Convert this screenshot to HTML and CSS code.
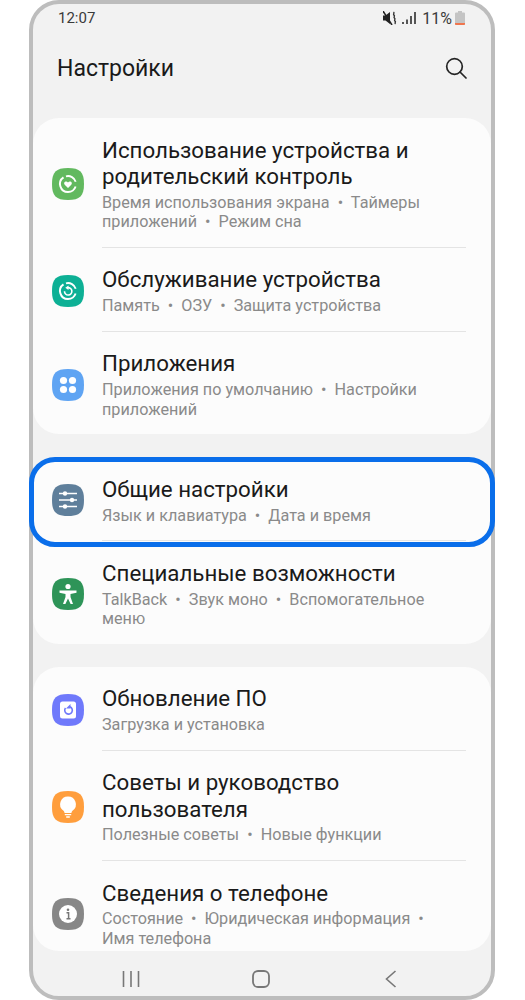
FILE: index.html
```html
<!DOCTYPE html>
<html lang="ru">
<head>
    <meta charset="utf-8">
    <title>Настройки</title>
    <link rel="stylesheet" href="styles.css">
</head>
<body>
    <div class="phone">
        <div class="status">
            <span class="time">12:07</span>
            <div class="status-right">
                <svg class="st-mute" width="14" height="14" viewBox="0 0 14 14"><path d="M0 4.500h2.500L7 1v12L2.500 9.500H0z" fill="#222"/><path d="M0 0l9 14" stroke="#222" stroke-width="1.500"/><path d="M10.500 1c1.500 1.200-1 2.200.5 3.200s-1 2 .5 3-1 2 .5 3-1 1.500.5 2.800" stroke="#333" stroke-width="1.400" fill="none"/></svg>
                <svg class="st-signal" width="14" height="14" viewBox="0 0 14 14"><rect x="0" y="11" width="2" height="2" fill="#555"/><rect x="4" y="8.500" width="2" height="4.500" fill="#555"/><rect x="8" y="5" width="2" height="8" fill="#555"/><rect x="12" y="1" width="2" height="12" fill="#555"/></svg>
                <span class="pct">11%</span>
                <svg class="st-batt" width="10" height="14" viewBox="0 0 10 14"><path d="M3 0h4v1.500h2a1 1 0 0 1 1 1V13a1 1 0 0 1-1 1H1a1 1 0 0 1-1-1V2.500a1 1 0 0 1 1-1h2z" fill="#c4c4c4"/><path d="M0 12h10v1a1 1 0 0 1-1 1H1a1 1 0 0 1-1-1z" fill="#f0764e"/></svg>
            </div>
        </div>

        <div class="header">
            <h1>Настройки</h1>
            <svg width="22" height="22" viewBox="0 0 22 22"><circle cx="9.500" cy="9.500" r="7.800" fill="none" stroke="#252525" stroke-width="1.700"/><path d="M15 15l6 6" stroke="#252525" stroke-width="1.700" stroke-linecap="round"/></svg>
        </div>

        <div class="card">
            <div class="row">
                <svg class="ico" viewBox="0 0 32 32"><path fill="#62b95f" d="M16 0C28 0 32 4 32 16S28 32 16 32 0 28 0 16 4 0 16 0Z"/><path d="M23.600 18.500A8 8 0 0 1 16 24a8 8 0 0 1-4.500-14.600" fill="none" stroke="#fff" stroke-width="1.900"/><path d="M14 8.300a8 8 0 0 1 9.700 5.500" fill="none" stroke="#fff" stroke-width="1.900"/><path d="M16 20l-3.300-3.300c-1.800-2 1.200-4.400 3.300-2.200 2.100-2.200 5.100.2 3.300 2.200z" fill="#fff"/></svg>
                <div class="txt">
                    <div class="title">Использование устройства и родительский контроль</div>
                    <div class="sub">Время использования экрана&nbsp; •&nbsp; Таймеры приложений&nbsp; •&nbsp; Режим сна</div>
                </div>
            </div>
            <div class="sep"></div>
            <div class="row">
                <svg class="ico" viewBox="0 0 32 32"><path fill="#0db095" d="M16 0C28 0 32 4 32 16S28 32 16 32 0 28 0 16 4 0 16 0Z"/><path d="M23.600 18.500A8 8 0 0 1 16 24a8 8 0 0 1-4.500-14.600" fill="none" stroke="#fff" stroke-width="1.900"/><path d="M14 8.300a8 8 0 0 1 9.700 5.500" fill="none" stroke="#fff" stroke-width="1.900"/><path d="M15.500 12.700a3.700 3.700 0 1 1-3 3.500" fill="none" stroke="#fff" stroke-width="1.600"/><path d="M16.500 10.500l-3.200 2.300 3.200 2.300z" fill="#fff"/></svg>
                <div class="txt">
                    <div class="title">Обслуживание устройства</div>
                    <div class="sub">Память&nbsp; •&nbsp; ОЗУ&nbsp; •&nbsp; Защита устройства</div>
                </div>
            </div>
            <div class="sep"></div>
            <div class="row">
                <svg class="ico" viewBox="0 0 32 32"><path fill="#5fa4f3" d="M16 0C28 0 32 4 32 16S28 32 16 32 0 28 0 16 4 0 16 0Z"/><circle cx="11.500" cy="11.500" r="3.600" fill="#fff"/><circle cx="20.500" cy="11.500" r="3.600" fill="#fff"/><circle cx="11.500" cy="20.500" r="3.600" fill="#fff"/><circle cx="20.500" cy="20.500" r="3.600" fill="#fff"/></svg>
                <div class="txt">
                    <div class="title">Приложения</div>
                    <div class="sub">Приложения по умолчанию&nbsp; •&nbsp; Настройки приложений</div>
                </div>
            </div>
        </div>

        <div class="card">
            <div class="highlight"></div>
            <div class="row">
                <svg class="ico" viewBox="0 0 32 32"><path fill="#5f7f9b" d="M16 0C28 0 32 4 32 16S28 32 16 32 0 28 0 16 4 0 16 0Z"/><path d="M7 9.500h18M7 16h18M7 22.500h18" stroke="#fff" stroke-width="1.500"/><circle cx="13" cy="9.500" r="2.200" fill="#fff"/><circle cx="20" cy="16" r="2.200" fill="#fff"/><circle cx="13" cy="22.500" r="2.200" fill="#fff"/></svg>
                <div class="txt">
                    <div class="title">Общие настройки</div>
                    <div class="sub">Язык и клавиатура&nbsp; •&nbsp; Дата и время</div>
                </div>
            </div>
            <div class="sep"></div>
            <div class="row">
                <svg class="ico" viewBox="0 0 32 32"><path fill="#2e9458" d="M16 0C28 0 32 4 32 16S28 32 16 32 0 28 0 16 4 0 16 0Z"/><circle cx="16" cy="8.500" r="2.600" fill="#fff"/><path d="M7.500 12.500h17v2.200l-6 1.300v3l2.500 7h-2.400L16 20.500 13.400 26H11l2.500-7v-3l-6-1.300z" fill="#fff"/></svg>
                <div class="txt">
                    <div class="title">Специальные возможности</div>
                    <div class="sub">TalkBack&nbsp; •&nbsp; Звук моно&nbsp; •&nbsp; Вспомогательное меню</div>
                </div>
            </div>
        </div>

        <div class="card card-end">
            <div class="row">
                <svg class="ico" viewBox="0 0 32 32"><path fill="#6f79fb" d="M16 0C28 0 32 4 32 16S28 32 16 32 0 28 0 16 4 0 16 0Z"/><rect x="8" y="7.500" width="16" height="17" rx="2.500" fill="#fff"/><path d="M13.500 14a3.800 3.800 0 1 0 4.500-1.200" fill="none" stroke="#6f79fb" stroke-width="1.600"/><path d="M18.500 10v4.500h-4.500z" fill="#6f79fb"/></svg>
                <div class="txt">
                    <div class="title">Обновление ПО</div>
                    <div class="sub">Загрузка и установка</div>
                </div>
            </div>
            <div class="sep"></div>
            <div class="row">
                <svg class="ico" viewBox="0 0 32 32"><path fill="#ff9e3d" d="M16 0C28 0 32 4 32 16S28 32 16 32 0 28 0 16 4 0 16 0Z"/><path d="M16 5.500a7.800 7.800 0 0 1 4.800 14c-.9.800-1.300 1.500-1.300 2.500h-7c0-1-.4-1.700-1.300-2.500A7.800 7.800 0 0 1 16 5.500z" fill="#fff"/><path d="M12.800 23.700h6.400M14.200 26h3.600" stroke="#fff" stroke-width="1.300"/></svg>
                <div class="txt">
                    <div class="title">Советы и руководство пользователя</div>
                    <div class="sub">Полезные советы&nbsp; •&nbsp; Новые функции</div>
                </div>
            </div>
            <div class="sep"></div>
            <div class="row end">
                <svg class="ico" viewBox="0 0 32 32"><path fill="#878787" d="M16 0C28 0 32 4 32 16S28 32 16 32 0 28 0 16 4 0 16 0Z"/><circle cx="16" cy="16" r="9" fill="#fff"/><circle cx="16" cy="11.800" r="1.300" fill="#777"/><path d="M14.500 14.800H16.600V20.500M14.500 20.800h4" fill="none" stroke="#777" stroke-width="1.500"/></svg>
                <div class="txt">
                    <div class="title">Сведения о телефоне</div>
                    <div class="sub">Состояние&nbsp; •&nbsp; Юридическая информация&nbsp; •<br>Имя телефона</div>
                </div>
            </div>
        </div>

        <div class="nav">
            <div class="nav-item"><svg width="18" height="18" viewBox="0 0 18 18"><path d="M1.500 1v16M9 1v16M16.500 1v16" stroke="#777" stroke-width="1.600"/></svg></div>
            <div class="nav-item"><svg width="18" height="18" viewBox="0 0 18 18"><rect x="1" y="1" width="16" height="16" rx="5" fill="none" stroke="#777" stroke-width="1.800"/></svg></div>
            <div class="nav-item"><svg width="12" height="18" viewBox="0 0 12 18"><path d="M10.500 1L1.500 9l9 8" fill="none" stroke="#777" stroke-width="1.600"/></svg></div>
        </div>
    </div>
</body>
</html>
```

FILE: styles.css
```css
html, body
{
	margin: 0;
	background-color: #fff;
}

body
{
	font-family: Roboto, "Liberation Sans", sans-serif;
	color: #1a1a1a;
}

div.phone
{
	box-sizing: border-box;
	width: 466px;
	height: 1000px;
	margin-left: 29px;
	border: 4px solid #bdbdbd;
	border-radius: 30px;
	background-color: #f2f2f2;
}

div.status
{
	display: flex;
	justify-content: space-between;
	align-items: center;
	height: 28px;
	padding: 0 26px 0 25px;
	font-size: 15px;
	color: #3a3a3a;
}

div.status-right
{
	display: flex;
	align-items: center;
}

span.pct
{
	margin: 0 3px 0 6px;
	font-size: 16px;
}

.st-signal
{
	margin-left: 5px;
}

div.header
{
	display: flex;
	justify-content: space-between;
	align-items: center;
	height: 72px;
	padding: 0 24px;
	margin-bottom: 14px;
}

h1
{
	margin: 0;
	font-size: 23px;
	font-weight: 400;
}

div.card
{
	position: relative;
	margin-bottom: 23px;
	border-radius: 26px;
	background-color: #fcfcfc;
}

div.card-end
{
	margin-bottom: 0;
}

div.row
{
	display: flex;
	align-items: center;
	gap: 18px;
	padding: 18.600px 41px 15.200px 19px;
}

div.row.end
{
	padding-bottom: 2.400px;
}

svg.ico
{
	flex: none;
	width: 32px;
	height: 32px;
}

div.title
{
	font-size: 22.300px;
	line-height: 26.400px;
}

div.sub
{
	margin-top: 3.400px;
	font-size: 16.200px;
	line-height: 19.400px;
	color: #8a8a8a;
}

div.sep
{
	height: 1px;
	margin: 0 25px 0 69px;
	background-color: #e4e4e4;
}

div.highlight
{
	position: absolute;
	top: 0;
	left: -4px;
	right: -4px;
	height: 90px;
	box-sizing: border-box;
	border: 5px solid #0a6eea;
	border-radius: 26px;
}

div.nav
{
	display: flex;
	justify-content: center;
	align-items: center;
	height: 46px;
	padding: 10px 2px 0 0;
	box-sizing: border-box;
}

div.nav-item
{
	display: flex;
	justify-content: center;
	width: 130px;
}
```
